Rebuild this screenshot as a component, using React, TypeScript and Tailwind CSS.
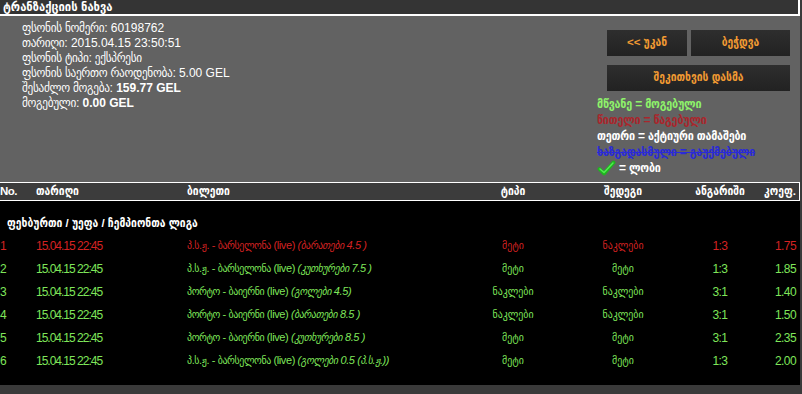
import React from 'react';

const font = "font-['Liberation_Sans','DejaVu_Sans_Condensed',sans-serif]";

type Row = {
  no: string;
  match: string;
  market: string;
  type: string;
  result: string;
  score: string;
  coef: string;
  lost?: boolean;
};

const rows: Row[] = [
  { no: '1', match: 'პ.ს.ჟ. - ბარსელონა (live)', market: '(ბარათები 4.5 )', type: 'მეტი', result: 'ნაკლები', score: '1:3', coef: '1.75', lost: true },
  { no: '2', match: 'პ.ს.ჟ. - ბარსელონა (live)', market: '(კუთხურები 7.5 )', type: 'მეტი', result: 'მეტი', score: '1:3', coef: '1.85' },
  { no: '3', match: 'პორტო - ბაიერნი (live)', market: '(გოლები 4.5)', type: 'ნაკლები', result: 'ნაკლები', score: '3:1', coef: '1.40' },
  { no: '4', match: 'პორტო - ბაიერნი (live)', market: '(ბარათები 8.5 )', type: 'ნაკლები', result: 'ნაკლები', score: '3:1', coef: '1.50' },
  { no: '5', match: 'პორტო - ბაიერნი (live)', market: '(კუთხურები 8.5 )', type: 'მეტი', result: 'მეტი', score: '3:1', coef: '2.35' },
  { no: '6', match: 'პ.ს.ჟ. - ბარსელონა (live)', market: '(გოლები 0.5 (პ.ს.ჟ.))', type: 'მეტი', result: 'მეტი', score: '1:3', coef: '2.00' },
];

const cols = 'grid grid-cols-[36px_151px_283px_86px_134px_60px_50px] items-center';

const Button: React.FC<{ label: string; className?: string }> = ({ label, className }) => (
  <button
    className={`h-[26px] bg-gradient-to-b from-[#2e2e2e] to-[#222] text-[#f19a32] text-[11.5px] font-bold ${className ?? ''}`}
  >
    {label}
  </button>
);

const CheckMark = () => (
  <svg width="19" height="16" viewBox="0 0 19 16">
    <path d="M2.5 9 L7 13.5 L16.5 2.5" fill="none" stroke="#1fb51f" strokeWidth="3.8" strokeLinecap="round" strokeLinejoin="round" />
    <path d="M3 9 L7 12.5 L16 3" fill="none" stroke="#52ec52" strokeWidth="1.4" strokeLinecap="round" strokeLinejoin="round" />
  </svg>
);

export default function App() {
  return (
    <div className={`w-[802px] h-[394px] bg-[#3a3a3a] overflow-hidden ${font}`}>
      <div className="w-[800px]">
        {/* title */}
        <div className="h-[16px] bg-[#343434] border-b-2 border-r-2 border-white text-white text-[12.5px] font-bold leading-[14px] pl-[3px]">
          ტრანზაქციის ნახვა
        </div>

        {/* info panel */}
        <div className="h-[166px] bg-[#626262] flex">
          <div className="pl-[22px] pt-[5px] text-white text-[12px] leading-[15px]">
            <div><span className="text-[12.5px] tracking-[-0.3px]">ფსონის ნომერი:</span> 60198762</div>
            <div><span className="text-[12.5px] tracking-[-0.3px]">თარიღი:</span> 2015.04.15 23:50:51</div>
            <div className="text-[12.5px] tracking-[-0.3px]">ფსონის ტიპი: ექსპრესი</div>
            <div><span className="text-[12.5px] tracking-[-0.3px]">ფსონის საერთო რაოდენობა:</span> 5.00 GEL</div>
            <div><span className="text-[12.5px] tracking-[-0.3px]">შესაძლო მოგება:</span> <b>159.77 GEL</b></div>
            <div><span className="text-[12.5px] tracking-[-0.3px]">მოგებული:</span> <b>0.00 GEL</b></div>
          </div>

          <div className="ml-auto w-[215px] pt-[14px]">
            <div className="flex gap-[4px] pl-[22px]">
              <Button label="<< უკან" className="w-[80px]" />
              <Button label="ბეჭდვა" className="w-[99px]" />
            </div>
            <div className="pl-[22px] mt-[8px]">
              <Button label="შეკითხვის დასმა" className="w-[183px]" />
            </div>
            <div className="mt-[5px] pl-[12px] text-[12px] font-bold leading-[16px] tracking-[-0.2px]">
              <div className="text-[#8ef26a]">მწვანე = მოგებული</div>
              <div className="text-[#aa262c]">წითელი = წაგებული</div>
              <div className="text-white">თეთრი = აქტიური თამაშები</div>
              <div className="text-[#2a2ad8] line-through">ხაზგადასმული = გაუქმებული</div>
              <div className="flex items-center gap-[3px] text-white">
                <CheckMark />
                <span>= ლობი</span>
              </div>
            </div>
          </div>
        </div>

        {/* table header */}
        <div className={`${cols} h-[19px] bg-[#3c3c3c] border-y-[1.5px] border-r-[1.5px] border-white text-white text-[11.5px] font-bold`}>
          <div className="tracking-[-0.6px]">No.</div>
          <div>თარიღი</div>
          <div>ბილეთი</div>
          <div className="text-center">ტიპი</div>
          <div className="text-center">შედეგი</div>
          <div className="text-center">ანგარიში</div>
          <div className="text-right pr-[4px]">კოეფ.</div>
        </div>

        {/* body */}
        <div className="h-[184px] bg-black pt-[14px]">
          <div className="h-[17px] pl-[7px] text-white text-[11.5px] font-bold leading-[17px]">
            ფეხბურთი / უეფა / ჩემპიონთა ლიგა
          </div>
          <div className="mt-[2px]">
            {rows.map((r) => (
              <div
                key={r.no}
                className={`${cols} h-[23px] text-[12px] ${r.lost ? 'text-[#d42222]' : 'text-[#7fe65a]'}`}
              >
                <div>{r.no}</div>
                <div className="tracking-[-1px]">15.04.15 22:45</div>
                <div className="whitespace-nowrap text-[11px] tracking-[-0.4px]">
                  {r.match} <i>{r.market}</i>
                </div>
                <div className="text-center text-[11px]">{r.type}</div>
                <div className="text-center text-[11px]">{r.result}</div>
                <div className="text-center tracking-[-0.6px]">{r.score}</div>
                <div className="text-right pr-[4px] tracking-[-0.6px]">{r.coef}</div>
              </div>
            ))}
          </div>
        </div>
      </div>
    </div>
  );
}
